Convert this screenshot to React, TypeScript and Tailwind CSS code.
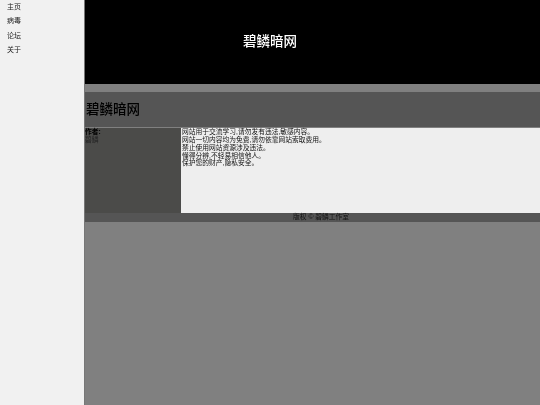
export default function App() {
  const cjk = "font-['Liberation_Sans','Noto_Sans_CJK_SC',sans-serif]";
  return (
    <div className={`flex h-[405px] w-[540px] overflow-hidden bg-[#808080] blur-[0.3px] ${cjk}`}>
      <nav className="flex h-full w-[84px] shrink-0 flex-col gap-[6.9px] bg-[#f1f1f1] pl-[7px] pt-[3px] text-[7px] leading-[7.5px] text-[#222]">
        <a>主页</a>
        <a>病毒</a>
        <a>论坛</a>
        <a>关于</a>
      </nav>
      <div className="flex min-w-0 flex-1 flex-col border-l border-[#777]">
        <header className="flex h-[84px] items-center justify-center bg-black pr-[85px] text-[13.5px] font-medium text-white">碧鳞暗网</header>
        <div className="h-[8px]" />
        <h1 className="flex h-[35px] items-center bg-[#555] pl-px pt-px text-[13.5px] font-medium text-black">碧鳞暗网</h1>
        <div className="h-px" />
        <main className="flex h-[85px]">
          <aside className="w-[96px] shrink-0 bg-[#4b4b49] text-[6.75px] leading-[8px] text-black">
            <div className="font-bold">作者:</div>
            <div className="text-[#222]">碧鳞</div>
          </aside>
          <article className="flex flex-1 flex-col bg-[#eeeeee] pl-px text-[6.75px] leading-[8px] text-[#111]">
            <p>网站用于交流学习,请勿发有违法,敏感内容。</p>
            <p>网站一切内容均为免费,请勿依靠网站索取费用。</p>
            <p>禁止使用网站资源涉及违法。</p>
            <p>懂得分辨,不轻易相信他人。</p>
            <p className="-mt-px">保护您的财产,隐私安全。</p>
          </article>
        </main>
        <footer className="flex h-[9px] items-center justify-center bg-[#555] pl-[17px] text-[6.75px] leading-none text-[#111]">版权 © 碧鳞工作室</footer>
      </div>
    </div>
  );
}
